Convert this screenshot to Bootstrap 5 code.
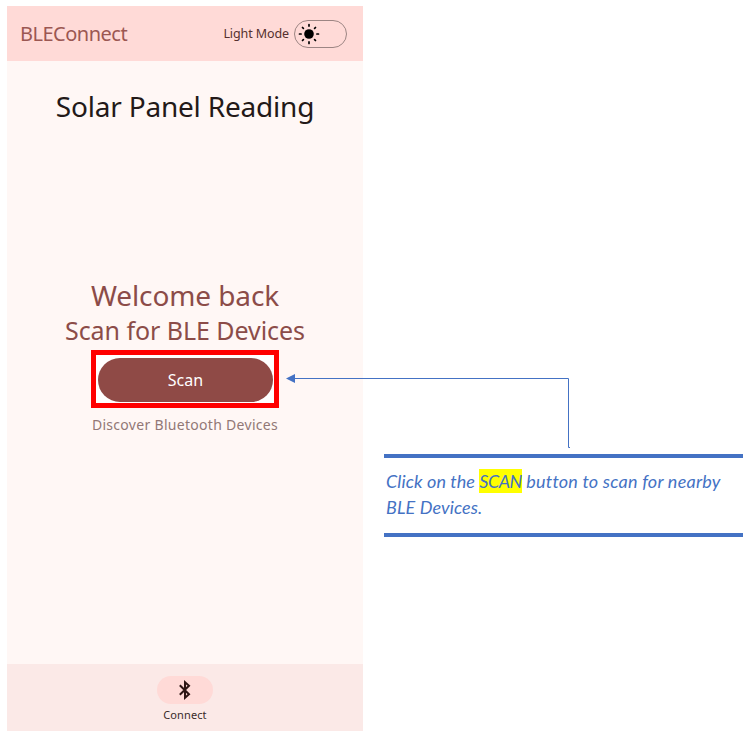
<!DOCTYPE html>
<html lang="en">
<head>
<meta charset="utf-8">
<meta name="viewport" content="width=device-width, initial-scale=1">
<title>BLEConnect</title>
<link href="https://cdn.jsdelivr.net/npm/bootstrap@5.3.0/dist/css/bootstrap.min.css" rel="stylesheet">
<style>
body { background: #fff; overflow: hidden; }
.guide { height: 738px; padding: 6px 0 0 7px; gap: 21px; }
.phone { width: 356px; height: 725px; background: #fff7f5; font-family: "Noto Sans", sans-serif; line-height: 1; white-space: nowrap; }
.app-bar { height: 55px; background: #ffdad7; padding: 0 16px 0 13px; }
.app-name { font-size: 20px; color: #9b5752; letter-spacing: -.5px; }
.mode-label { font-size: 12.5px; color: #55302e; letter-spacing: -.1px; margin: 2px 5px 0 0; }
.mode-switch { width: 53px; height: 28px; border: 1px solid #9c8583; padding-left: 3px; }
.page-title, .welcome, .subtitle { line-height: 1; }
.page-title { font-size: 28px; color: #231918; margin-top: 31px; letter-spacing: -.2px; }
.welcome { font-size: 28px; color: #8c4c48; margin-top: 161px; letter-spacing: -.1px; }
.subtitle { font-size: 25px; color: #8c4c48; margin-top: 9px; letter-spacing: -.05px; }
.scan-frame { width: 188px; height: 58px; border: 5px solid #f00; background: #fff; margin-top: 7px; padding: 3px 1px 1px 2px; }
.scan-btn, .scan-btn:hover { background: #8f4a46; color: #fff; font-size: 16px; letter-spacing: 0; line-height: 1; border: 0; }
.hint { font-size: 14px; color: #927776; margin-top: 10px; letter-spacing: .3px; }
.bottom-bar { height: 67px; background: #fbe9e7; padding-top: 12px; }
.tab-pill { width: 56px; height: 28px; background: #ffdad7; }
.tab-label { font-size: 11px; color: #3a2b2a; margin-top: 5px; letter-spacing: .1px; }
.callout { width: 359px; height: 83px; margin-top: 448px; border-top: 4px solid #4472c4; border-bottom: 4px solid #4472c4; padding: 10px 0 0 2px; color: #4472c4; font: italic 18px/26px Lato, sans-serif; letter-spacing: .22px; white-space: nowrap; }
.lead-in { letter-spacing: .1px; }
.hl { background: #ff0; color: inherit; padding: 1px 0; letter-spacing: -.5px; }
.connector { left: 280px; top: 370px; pointer-events: none; }
</style>
</head>
<body>
<main class="guide d-flex align-items-start position-relative">
  <section class="phone d-flex flex-column">
    <header class="app-bar d-flex align-items-center">
      <span class="app-name me-auto">BLEConnect</span>
      <span class="mode-label">Light Mode</span>
      <span class="mode-switch rounded-pill d-flex align-items-center">
        <svg width="22" height="22" viewBox="-11 -11 22 22" stroke="#000" stroke-width="1.7" stroke-linecap="round"><circle r="4.8" fill="#000" stroke="none"/><path d="M0-9.5v1.6M0 7.9v1.6M-9.5 0h1.6M7.900 0h1.600M-6.500-6.500l.9.9M5.600 5.600l.9.9M-6.500 6.500l.9-.9M5.600-5.600l.9-.9"/></svg>
      </span>
    </header>
    <div class="d-flex flex-column align-items-center flex-grow-1">
      <h1 class="page-title fw-normal mb-0">Solar Panel Reading</h1>
      <h2 class="welcome fw-normal mb-0">Welcome back</h2>
      <h3 class="subtitle fw-normal mb-0">Scan for BLE Devices</h3>
      <div class="scan-frame d-flex"><button type="button" class="scan-btn btn rounded-pill w-100">Scan</button></div>
      <p class="hint mb-0">Discover Bluetooth Devices</p>
    </div>
    <nav class="bottom-bar d-flex flex-column align-items-center">
      <span class="tab-pill rounded-pill d-flex align-items-center justify-content-center">
        <svg width="14" height="20" viewBox="0 0 14 20" fill="none" stroke="#2d1514" stroke-width="2"><path d="M1.800 5.300l9.200 9-4 3.500V2.200l4 3.500-9.200 9"/></svg>
      </span>
      <span class="tab-label">Connect</span>
    </nav>
  </section>
  <aside class="callout"><span class="lead-in">Click on the </span><mark class="hl">SCAN</mark> button to scan for nearby<br><span class="lead-in">BLE Devices.</span></aside>
  <svg class="connector position-absolute" width="292" height="80" viewBox="0 0 292 80"><path d="M14 8.5H288.5V77.500H290" fill="none" stroke="#4472c4"/><path d="M6 8.500L15 4v9z" fill="#4472c4"/></svg>
</main>
<script src="https://cdn.jsdelivr.net/npm/bootstrap@5.3.0/dist/js/bootstrap.bundle.min.js"></script>
</body>
</html>
